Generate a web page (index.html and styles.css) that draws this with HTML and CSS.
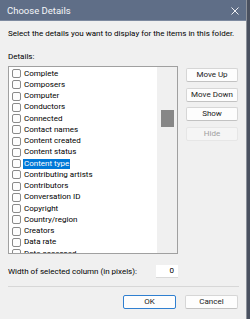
FILE: index.html
```html
<!DOCTYPE html>
<html>
<head>
<meta charset="utf-8">
<link rel="stylesheet" href="styles.css">
</head>
<body>
<div class="window">
  <div class="titlebar">
    <span class="title">Choose Details</span>
    <svg class="close" width="8" height="8" viewBox="0 0 8 8"><path d="M0.5 0.5 L7.5 7.5 M7.5 0.5 L0.5 7.5" stroke="#ffffff" stroke-width="0.9" fill="none"/></svg>
  </div>
  <div class="content">
    <p class="intro">Select the details you want to display for the items in this folder.</p>
    <div class="label">Details:</div>
    <div class="main">
      <div class="list">
        <ul class="items">
          <li><span class="cb"></span><span class="txt">Complete</span></li>
          <li><span class="cb"></span><span class="txt">Composers</span></li>
          <li><span class="cb"></span><span class="txt">Computer</span></li>
          <li><span class="cb"></span><span class="txt">Conductors</span></li>
          <li><span class="cb"></span><span class="txt">Connected</span></li>
          <li><span class="cb"></span><span class="txt">Contact names</span></li>
          <li><span class="cb"></span><span class="txt">Content created</span></li>
          <li><span class="cb"></span><span class="txt">Content status</span></li>
          <li class="selected"><span class="cb"></span><span class="txt">Content type</span></li>
          <li><span class="cb"></span><span class="txt">Contributing artists</span></li>
          <li><span class="cb"></span><span class="txt">Contributors</span></li>
          <li><span class="cb"></span><span class="txt">Conversation ID</span></li>
          <li><span class="cb"></span><span class="txt">Copyright</span></li>
          <li><span class="cb"></span><span class="txt">Country/region</span></li>
          <li><span class="cb"></span><span class="txt">Creators</span></li>
          <li><span class="cb"></span><span class="txt">Data rate</span></li>
          <li><span class="cb"></span><span class="txt">Date accessed</span></li>
        </ul>
        <div class="scrollbar"><div class="thumb"></div></div>
      </div>
      <div class="side">
        <button class="btn">Move Up</button>
        <button class="btn">Move Down</button>
        <button class="btn">Show</button>
        <button class="btn disabled">Hide</button>
      </div>
    </div>
    <div class="width-row">
      <span>Width of selected column (in pixels):</span>
      <div class="num">0</div>
    </div>
    <div class="sep"></div>
    <div class="footer">
      <button class="btn wide default">OK</button>
      <button class="btn wide">Cancel</button>
    </div>
  </div>
</div>
</body>
</html>
```

FILE: styles.css
```css
* { box-sizing: border-box; }
html, body { margin: 0; padding: 0; }
body {
  width: 250px;
  height: 319px;
  background: #4a5160;
  font-family: Roboto, "Liberation Sans", sans-serif;
  font-size: 8px;
  color: #000;
  overflow: hidden;
}
.window {
  width: 247px;
  height: 319px;
  background: #f0f0f0;
  border-right: 1px solid #8d929b;
}
.titlebar {
  height: 21px;
  background: #5f6e87;
  display: flex;
  align-items: center;
  justify-content: space-between;
  padding: 0 7px 0 7px;
  border-bottom: 1px solid #7d8aa0;
}
.title {
  color: #f4f6f9;
  font-size: 9.5px;
  line-height: 12px;
  margin-top: 1px;
}
.close { display: block; margin-top: 1px; }
.content { padding: 7px 8px 0 8px; }
.intro { margin: 0; line-height: 12px; height: 12px; white-space: nowrap; }
.label { margin-top: 11px; line-height: 12px; height: 12px; }
.main {
  margin-top: 3px;
  display: flex;
  gap: 8px;
}
.list {
  width: 171px;
  height: 188px;
  background: #fff;
  border: 1px solid #a0a0a0;
  display: flex;
  overflow: hidden;
}
.items {
  list-style: none;
  margin: 0;
  padding: 1px 0 0 0;
  flex: 1;
}
.items li {
  height: 11.25px;
  display: flex;
  align-items: center;
  padding-left: 3px;
  white-space: nowrap;
}
.cb {
  width: 9px;
  height: 9px;
  border: 1px solid #8a8a8a;
  border-radius: 2px;
  background: #fdfdfd;
  flex: none;
  margin-right: 2px;
}
.txt {
  line-height: 10px;
  height: 10px;
  padding: 0 1px;
}
.selected .txt {
  background: #0078d7;
  color: #fff;
}
.scrollbar {
  width: 20px;
  background: #f0f0f0;
  padding-top: 43px;
  display: flex;
  justify-content: center;
}
.thumb {
  width: 13px;
  height: 17px;
  background: #878787;
}
.side {
  display: flex;
  flex-direction: column;
  gap: 5.5px;
  padding-top: 2px;
}
.btn {
  width: 52px;
  height: 14px;
  padding: 0;
  font-family: inherit;
  font-size: 8px;
  line-height: 12px;
  color: #1b1b1b;
  background: #fdfdfd;
  border: 1px solid #d6d6d6;
  border-bottom-color: #c2c2c2;
  border-radius: 2px;
}
.btn.disabled {
  background: #f5f5f5;
  border-color: #e6e6e6;
  color: #a0a0a0;
}
.width-row {
  margin-top: 11px;
  display: flex;
  align-items: center;
  height: 13px;
}
.width-row span { flex: 1; line-height: 12px; white-space: nowrap; }
.num {
  width: 22px;
  height: 13px;
  margin-right: 60px;
  background: #fff;
  border-bottom: 1px solid #d8d8d8;
  text-align: right;
  padding-right: 4px;
  line-height: 12px;
}
.sep {
  margin-top: 8px;
  height: 1px;
  background: #d7d7d7;
  width: 231px;
}
.footer {
  margin-top: 8px;
  display: flex;
  justify-content: flex-end;
  gap: 9px;
}
.btn.wide { width: 53px; }
.btn.default { border: 1px solid #2f7fd0; }
```
